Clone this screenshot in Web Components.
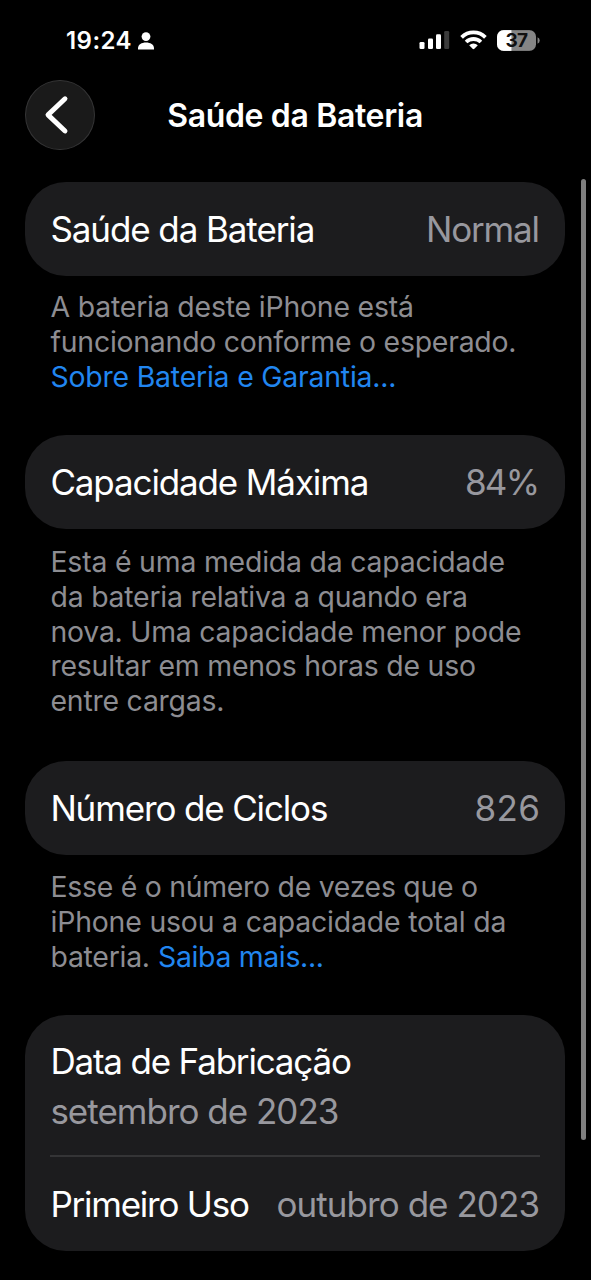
<!DOCTYPE html>
<html lang="pt-BR">
<head>
<meta charset="utf-8">
<title>Saúde da Bateria</title>
<style>
html,body{margin:0;background:#000;height:1280px;overflow:hidden}
body{font-family:Inter,"Liberation Sans",sans-serif;color:#fff}
</style>
</head>
<body>
<battery-screen></battery-screen>
<script>
function define(name, html, ready) {
  const t = document.createElement('template');
  t.innerHTML = html;
  customElements.define(name, class extends HTMLElement {
    connectedCallback() {
      if (this.shadowRoot) return;
      this.attachShadow({ mode: 'open' }).append(t.content.cloneNode(true));
      if (ready) ready(this);
    }
  });
}

// One line of text whose tracking is adjusted to a given advance width.
define('text-line', `<style>
:host{display:block;white-space:pre}
span{display:inline-block}
</style><span><slot></slot></span>`, el => {
  const s = el.shadowRoot.querySelector('span');
  const w = parseFloat(el.getAttribute('w'));
  const fit = () => {
    s.style.letterSpacing = '0px';
    const n = el.textContent.length;
    const sp = (w - s.getBoundingClientRect().width) / (n - 1);
    s.style.letterSpacing = sp + 'px';
    s.style.marginRight = -sp + 'px';
  };
  if (w) fit();
});

define('status-bar', `<style>
:host{display:flex;height:80px;box-sizing:border-box;padding:1px 51px 0 66px;justify-content:space-between;align-items:center}
div{display:flex;align-items:center}
text-line{font-size:24px;font-weight:600;line-height:30px}
svg{display:block}
.r{gap:10px;margin-top:-1px}
.bat{position:relative;width:43.5px;height:21px}
.bat text-line{position:absolute;left:9px;top:0;font-size:19px;font-weight:700;line-height:21px;color:#111}
</style>
<div style="gap:5px"><text-line w="65.5">19:24</text-line>
<svg width="18" height="20" viewBox="0 0 18 20" fill="#fff"><circle cx="9" cy="5.6" r="4.4"/><path d="M1 18.6V17.2c0-3.7 3.6-5.8 8-5.8s8 2.1 8 5.8v1.4z"/></svg></div>
<div class="r">
<svg width="31" height="20" viewBox="0 0 31 20" fill="#fff"><rect x="0.5" y="12" width="5" height="7" rx="1.3"/><rect x="9" y="8.5" width="5" height="10.5" rx="1.3"/><rect x="17" y="4.3" width="5" height="14.7" rx="1.3"/><rect x="25.2" y="1" width="5" height="18" rx="1.3" fill="#3b3b3b"/></svg>
<svg width="27" height="20" viewBox="0 0 27 20"><g fill="none" stroke="#fff" stroke-width="3.8"><path d="M1.6 7.3a17 17 0 0 1 23.8 0"/><path d="M6.1 12a10.6 10.6 0 0 1 14.8 0"/></g><path d="M9.2 15.2a6.2 6.2 0 0 1 8.6 0l-3.4 3.5q-.9.9-1.8 0z" fill="#fff"/></svg>
<div class="bat"><svg width="44" height="21" viewBox="0 0 44 21"><defs><clipPath id="b"><rect width="39.5" height="21" rx="6.8"/></clipPath></defs><g clip-path="url(#b)"><rect width="40" height="21" fill="#858585"/><rect width="14.6" height="21" fill="#fff"/></g><path d="M41 7.2q2.2 1 2.2 3.3t-2.2 3.3z" fill="#858585"/></svg><text-line w="22.5">37</text-line></div>
</div>`);

define('nav-bar', `<style>
:host{display:grid;grid-template-columns:69.5px 1fr 69.5px;align-items:center;height:70px;padding:0 25.5px 0 25px}
button{all:unset;box-sizing:border-box;width:69.5px;height:70px;border-radius:50%;background:#1a1a1a;border:1.5px solid #343435;display:block}
svg{display:block;margin:-1px}
.t{justify-self:center;font-size:32px;font-weight:600;line-height:40px;padding-top:2px}
</style>
<button aria-label="Voltar"><svg width="70" height="70" viewBox="0 0 70 70" fill="none" stroke="#fff" stroke-width="4.9" stroke-linecap="round" stroke-linejoin="round"><path d="M40 18.8 23 34.9 40 51"/></svg></button>
<text-line class="t" w="256">Saúde da Bateria</text-line>`);

define('info-card', `<style>
:host{display:flex;flex-direction:column;background:#1c1c1e;border-radius:41px;margin:0 25.6px 0 25px;padding:0 25.4px}
::slotted(info-row:not(:last-child)){border-bottom:2px solid #343436}
</style><slot></slot>`);

define('info-row', `<style>
:host{display:flex;justify-content:space-between;align-items:center;height:94px;font-size:35px;line-height:50px;box-sizing:border-box}
:host([stacked]){flex-direction:column;align-items:flex-start;justify-content:flex-start;height:141.5px;padding-top:21.3px}
.v{color:#98989e}
</style><slot></slot><div class="v"><slot name="value"></slot></div>`);

define('foot-note', `<style>
:host{display:block;box-sizing:border-box;margin:0 50.5px;font-size:28.4px;line-height:34.7px;color:#8d8d92}
</style><slot></slot>`);

define('battery-screen', `<style>
:host{display:block;position:relative;width:591px;height:1280px;background:#000;overflow:hidden}
main{display:flex;flex-direction:column;padding-top:31.5px}
.link{color:#2186f0}
.mix{display:flex;gap:8px}
.bar{position:absolute;right:5px;top:179px;width:5px;height:961px;border-radius:3px;background:#7f7f7f}
</style>
<status-bar></status-bar>
<nav-bar></nav-bar>
<main>
<info-card><info-row><text-line w="265">Saúde da Bateria</text-line><text-line slot="value" w="114">Normal</text-line></info-row></info-card>
<foot-note style="padding-top:14.8px;height:159px">
<text-line w="363.5">A bateria deste iPhone está</text-line>
<text-line w="466">funcionando conforme o esperado.</text-line>
<text-line class="link" w="346">Sobre Bateria e Garantia...</text-line>
</foot-note>
<info-card><info-row><text-line w="319">Capacidade Máxima</text-line><text-line slot="value" w="75">84%</text-line></info-row></info-card>
<foot-note style="padding-top:16.6px;height:232.5px">
<text-line w="454.5">Esta é uma medida da capacidade</text-line>
<text-line w="417.5">da bateria relativa a quando era</text-line>
<text-line w="471">nova. Uma capacidade menor pode</text-line>
<text-line w="425.5">resultar em menos horas de uso</text-line>
<text-line w="174">entre cargas.</text-line>
</foot-note>
<info-card><info-row><text-line w="278">Número de Ciclos</text-line><text-line slot="value" w="65.5">826</text-line></info-row></info-card>
<foot-note style="padding-top:15.2px;height:160px">
<text-line w="427.5">Esse é o número de vezes que o</text-line>
<text-line w="456">iPhone usou a capacidade total da</text-line>
<div class="mix"><text-line w="99.5">bateria.</text-line><text-line class="link" w="166">Saiba mais...</text-line></div>
</foot-note>
<info-card><info-row stacked><text-line w="301.5">Data de Fabricação</text-line><text-line slot="value" w="289">setembro de 2023</text-line></info-row>
<info-row><text-line w="199.5">Primeiro Uso</text-line><text-line slot="value" w="263.5">outubro de 2023</text-line></info-row></info-card>
</main>
<div class="bar"></div>`);
</script>
</body>
</html>
